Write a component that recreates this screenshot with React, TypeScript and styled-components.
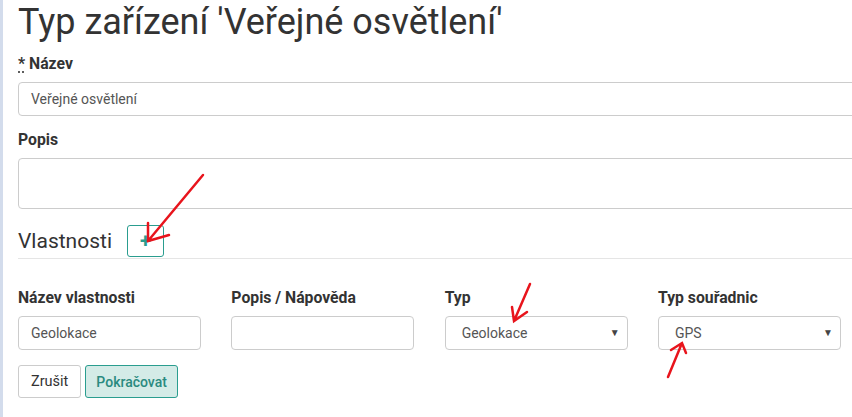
import React from "react";
import styled, { createGlobalStyle } from "styled-components";

const Global = createGlobalStyle`
  html, body { margin: 0; padding: 0; background: #fff; overflow: hidden; }
  body { font-family: Roboto, "Noto Sans", Arial, sans-serif; color: #333; }
  * { box-sizing: border-box; }
`;

const Page = styled.div`
  display: flex;
  width: 852px;
  height: 417px;
  position: relative;
  overflow: hidden;
`;

const Strip = styled.div`
  width: 3px;
  flex: none;
  background: #d3dcec;
`;

const Content = styled.main`
  flex: none;
  width: 900px;
  padding: 0 0 0 15px;
`;

const Title = styled.h1`
  margin: 0;
  padding-top: 2px;
  font-size: 36px;
  line-height: 40px;
  font-weight: 400;
  color: #333;
`;

const Field = styled.div<{ $mt?: number }>`
  margin-top: ${(p) => p.$mt ?? 0}px;
`;

const Label = styled.label`
  display: block;
  font-size: 15.75px;
  font-weight: 700;
  line-height: 20px;
  margin-bottom: 8px;
  color: #333;
`;

const Req = styled.abbr`
  text-decoration: underline dotted;
  text-underline-offset: 3px;
`;

const Input = styled.div<{ $h?: number; $select?: boolean }>`
  height: ${(p) => p.$h ?? 34}px;
  border: 1px solid #ccc;
  border-radius: 4px;
  padding: 0 12px 0 ${(p) => (p.$select ? 16 : 12)}px;
  font-size: 14px;
  line-height: 32px;
  color: #555;
  background: #fff;
  position: relative;
`;

const Caret = styled.span`
  position: absolute;
  right: 7px;
  top: 0;
  font-size: 10px;
  color: #444;
`;

const SectionHead = styled.div`
  display: flex;
  align-items: center;
  gap: 15px;
  margin-top: 16px;
  padding-bottom: 1px;
  border-bottom: 1px solid #e5e5e5;
`;

const SectionTitle = styled.h3`
  margin: 0;
  font-size: 21px;
  font-weight: 400;
  color: #333;
`;

const AddBtn = styled.button`
  width: 37px;
  height: 32px;
  border: 1px solid #2a9d8f;
  border-radius: 3px;
  background: #fff;
  color: #2a9d8f;
  font-size: 20px;
  font-weight: 700;
  padding: 0;
  display: flex;
  align-items: center;
  justify-content: center;
  font-family: Roboto, sans-serif;
`;

const Row = styled.div`
  display: grid;
  grid-template-columns: repeat(4, 183px);
  column-gap: 30.33px;
  margin-top: 29px;
`;

const Actions = styled.div`
  display: flex;
  gap: 4px;
  margin-top: 15px;
`;

const Btn = styled.button<{ $primary?: boolean }>`
  height: 33px;
  padding: 0 ${(p) => (p.$primary ? 10 : 12)}px;
  border-radius: 3px;
  font-family: Roboto, sans-serif;
  font-size: ${(p) => (p.$primary ? 14 : 14.5)}px;
  border: 1px solid ${(p) => (p.$primary ? "#2a9d8f" : "#ccc")};
  background: ${(p) => (p.$primary ? "#d4ebe7" : "#fff")};
  color: ${(p) => (p.$primary ? "#2a8a80" : "#333")};
  font-weight: ${(p) => (p.$primary ? 500 : 400)};
`;

const Marks = styled.svg`
  position: absolute;
  left: 0;
  top: 0;
  pointer-events: none;
`;

export default function App() {
  return (
    <>
      <Global />
      <Page>
        <Strip />
        <Content>
          <Title>Typ zařízení 'Veřejné osvětlení'</Title>
          <Field $mt={12}>
            <Label>
              <Req title="povinné">*</Req> Název
            </Label>
            <Input>Veřejné osvětlení</Input>
          </Field>
          <Field $mt={14}>
            <Label>Popis</Label>
            <Input $h={51} />
          </Field>
          <SectionHead>
            <SectionTitle>Vlastnosti</SectionTitle>
            <AddBtn>+</AddBtn>
          </SectionHead>
          <Row>
            <Field>
              <Label>Název vlastnosti</Label>
              <Input>Geolokace</Input>
            </Field>
            <Field>
              <Label>Popis / Nápověda</Label>
              <Input />
            </Field>
            <Field>
              <Label>Typ</Label>
              <Input $select>
                Geolokace<Caret>▼</Caret>
              </Input>
            </Field>
            <Field>
              <Label>Typ souřadnic</Label>
              <Input $select>
                GPS<Caret>▼</Caret>
              </Input>
            </Field>
          </Row>
          <Actions>
            <Btn>Zrušit</Btn>
            <Btn $primary>Pokračovat</Btn>
          </Actions>
        </Content>
        <Marks width="852" height="417" viewBox="0 0 852 417">
          <g stroke="#e8141c" strokeWidth="2.5" strokeLinecap="round" fill="none">
            <path d="M203 175 L148 241 M148 223 L148 241 L169 235" />
            <path d="M530 284 L514 321 M512 307 L514 321 L527 312" />
            <path d="M668 377 L682 343 M671 350 L682 343 L686 353" />
          </g>
        </Marks>
      </Page>
    </>
  );
}
